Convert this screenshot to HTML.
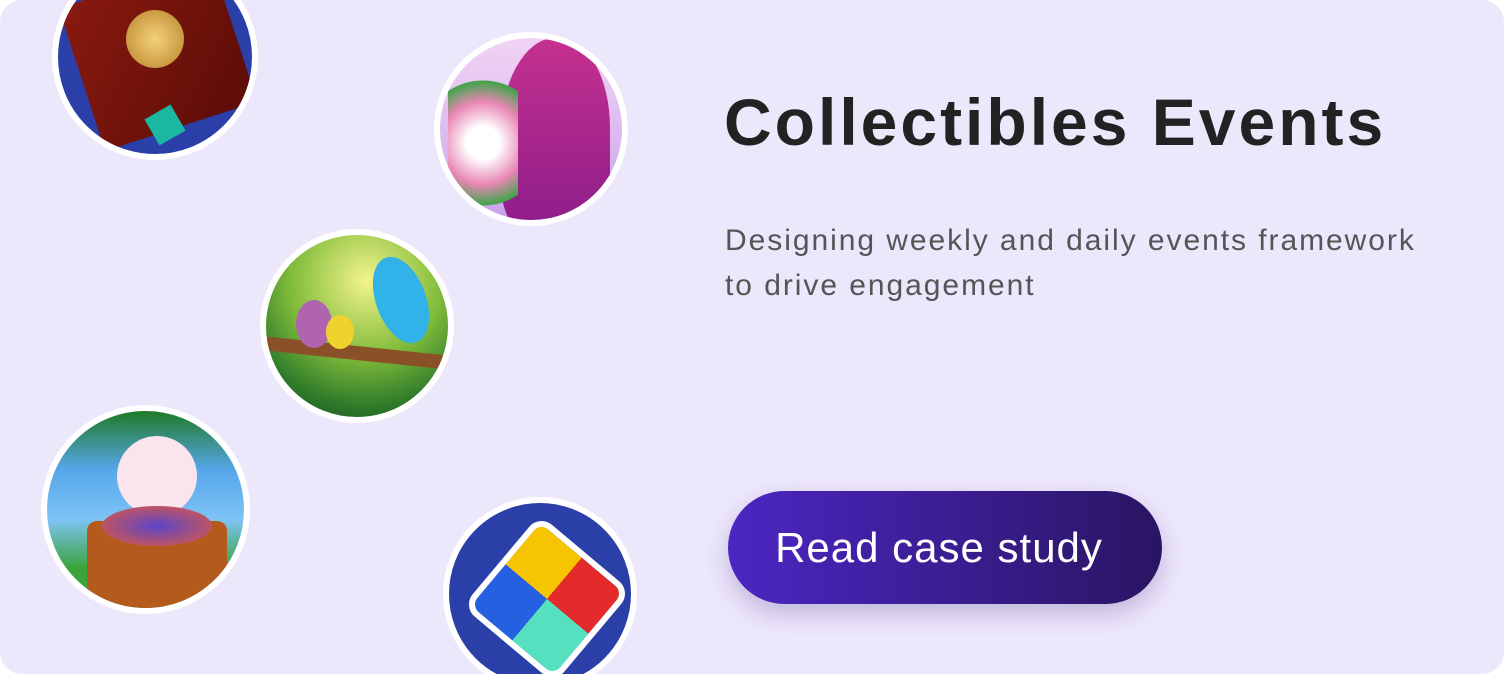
<!DOCTYPE html>
<html><head><style>
html,body{margin:0;padding:0;background:#fff;}
.card{position:relative;width:1504px;height:674px;background:#ede7fc;border-radius:22px;overflow:hidden;font-family:"Liberation Sans",sans-serif;}
.c{position:absolute;border-radius:50%;border:6px solid #fff;box-sizing:border-box;overflow:hidden;}
h1{position:absolute;left:724px;top:84px;margin:0;font-size:66px;font-weight:bold;color:#222;letter-spacing:3px;white-space:nowrap;}
p{position:absolute;left:725px;top:218px;margin:0;font-size:30px;line-height:45px;color:#555;letter-spacing:1.95px;white-space:nowrap;}
.btn{position:absolute;left:728px;top:491px;width:434px;height:113px;border-radius:57px;background:linear-gradient(90deg,#4c26c3,#2a1563);box-shadow:0 10px 24px rgba(60,40,120,.25);color:#fff;font-size:42px;line-height:113px;text-align:center;letter-spacing:1px;text-indent:-12px;}
</style></head><body>
<div class="card">
<div class="c" style="left:52px;top:-46px;width:206px;height:206px;background:#2a3fa8;">
 <div style="position:absolute;left:20px;top:20px;width:160px;height:150px;background:linear-gradient(135deg,#8a1a10,#5a0c06);border-radius:16px;transform:rotate(-18deg);"></div>
 <div style="position:absolute;left:68px;top:50px;width:58px;height:58px;border-radius:50%;background:radial-gradient(#f3d27a,#b8822a);"></div>
 <div style="position:absolute;left:92px;top:150px;width:30px;height:30px;background:#1ab8a0;transform:rotate(-30deg);"></div>
</div>
<div class="c" style="left:434px;top:32px;width:194px;height:194px;background:linear-gradient(180deg,#f1d4f4,#c9a3ea);">
 <div style="position:absolute;left:60px;top:0;width:110px;height:200px;background:linear-gradient(180deg,#c5318f,#8b1c8a);border-radius:50% 45% 20% 30%;"></div>
 <div style="position:absolute;left:8px;top:30px;width:70px;height:150px;background:radial-gradient(circle,#fff 20%,#e887b5 50%,#3fa54a 75%,transparent 76%);"></div>
</div>
<div class="c" style="left:260px;top:229px;width:194px;height:194px;background:radial-gradient(circle at 55% 25%,#f3f48a,#7fbb3a 45%,#2e7a2a 75%,#0e3f1a);">
 <div style="position:absolute;left:0;top:112px;width:200px;height:14px;background:#8a5128;transform:rotate(6deg);"></div>
 <div style="position:absolute;left:110px;top:20px;width:50px;height:90px;background:#31b2e8;border-radius:50%;transform:rotate(-20deg);"></div>
 <div style="position:absolute;left:30px;top:65px;width:36px;height:48px;background:#b064b0;border-radius:50%;"></div>
 <div style="position:absolute;left:60px;top:80px;width:28px;height:34px;background:#f0d22e;border-radius:50%;"></div>
</div>
<div class="c" style="left:41px;top:405px;width:209px;height:209px;background:linear-gradient(180deg,#1f7a26 0%,#56a7ea 30%,#7ec3f5 55%,#3aa33b 80%);">
 <div style="position:absolute;left:70px;top:25px;width:80px;height:80px;background:#fbe4ec;border-radius:50%;"></div>
 <div style="position:absolute;left:40px;top:110px;width:140px;height:90px;background:#b45a1c;border-radius:10px;"></div>
 <div style="position:absolute;left:55px;top:95px;width:110px;height:40px;background:radial-gradient(#5b45c8,#e65a3c);border-radius:50%;"></div>
</div>
<div class="c" style="left:443px;top:497px;width:194px;height:194px;background:#2a3fa8;">
 <div style="position:absolute;left:38px;top:36px;width:108px;height:108px;border:6px solid #fff;border-radius:16px;transform:rotate(40deg);overflow:hidden;background:conic-gradient(#e32b2b 0 25%,#55e0c0 0 50%,#2560e0 0 75%,#f6c400 0);"></div>
</div>
<h1>Collectibles Events</h1>
<p>Designing weekly and daily events framework<br>to drive engagement</p>
<div class="btn">Read case study</div>
</div>
</body></html>
